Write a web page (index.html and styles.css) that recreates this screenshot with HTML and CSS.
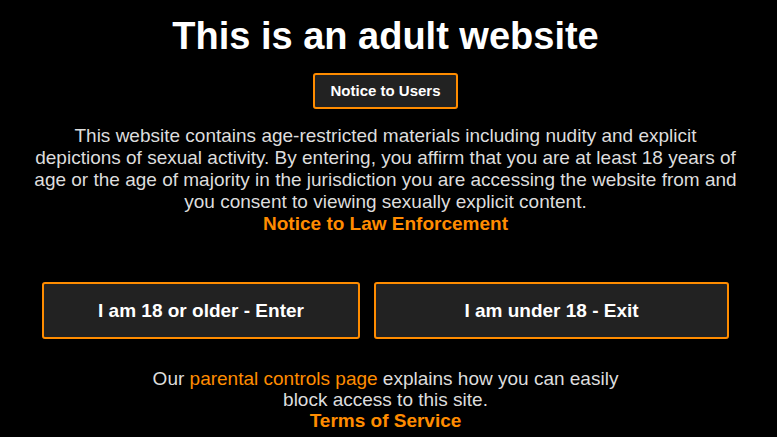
FILE: index.html
```html
<!DOCTYPE html>
<html lang="en">
<head>
    <meta charset="UTF-8">
    <meta name="viewport" content="width=device-width, initial-scale=1.0">
    <title>Age verification</title>
    <link rel="stylesheet" href="styles.css">
</head>
<body>
    <div class="gate">
        <h1 class="gate-title">This is an adult website</h1>
        <a class="notice-button" href="#">Notice to Users</a>

        <p class="gate-text">
            This website contains age-restricted materials including nudity and explicit<br>
            depictions of sexual activity. By entering, you affirm that you are at least 18 years of<br>
            age or the age of majority in the jurisdiction you are accessing the website from and<br>
            you consent to viewing sexually explicit content.
            <a class="law-link" href="#">Notice to Law Enforcement</a>
        </p>

        <div class="choice-row">
            <a class="choice-button choice-enter" href="#">I am 18 or older - Enter</a>
            <a class="choice-button choice-exit" href="#">I am under 18 - Exit</a>
        </div>

        <p class="parental-text">
            Our <a class="parental-link" href="#">parental controls page</a> explains how you can easily
            block access to this site.
            <a class="terms-link" href="#">Terms of Service</a>
        </p>
    </div>
</body>
</html>
```

FILE: styles.css
```css
body {
    margin: 0;
    background: #000;
    color: #fff;
    font-family: "Liberation Sans", Arial, sans-serif;
}
a {
    text-decoration: none;
}
.gate {
    margin: 0 auto;
    padding: 13px 6px 0 0;
    display: flex;
    flex-direction: column;
    align-items: center;
    text-align: center;
}
.gate-title {
    margin: 0;
    font-size: 38px;
    line-height: 46px;
    font-weight: 700;
}
.notice-button {
    margin-top: 14px;
    padding: 0 15px;
    height: 32px;
    line-height: 32px;
    background: #222;
    border: 2px solid #ff8c00;
    border-radius: 3px;
    color: #fff;
    font-size: 15px;
    font-weight: 700;
}
.gate-text {
    margin: 16px 0 0;
    white-space: nowrap;
    font-size: 19px;
    line-height: 22px;
    color: #ddd;
}
.law-link {
    display: block;
    color: #ff8c00;
    font-weight: 700;
}
.choice-row {
    margin-top: 47px;
    display: flex;
    gap: 14px;
}
.choice-button {
    height: 53px;
    display: flex;
    justify-content: center;
    align-items: center;
    background: #222;
    border: 2px solid #ff8c00;
    border-radius: 3px;
    color: #fff;
    font-size: 19px;
    font-weight: 700;
}
.choice-enter {
    width: 314px;
}
.choice-exit {
    width: 351px;
}
.parental-text {
    margin: 29px 0 0;
    width: 500px;
    font-size: 19px;
    line-height: 21px;
    color: #ddd;
}
.parental-link {
    color: #ff8c00;
}
.terms-link {
    display: block;
    color: #ff8c00;
    font-weight: 700;
}
```
